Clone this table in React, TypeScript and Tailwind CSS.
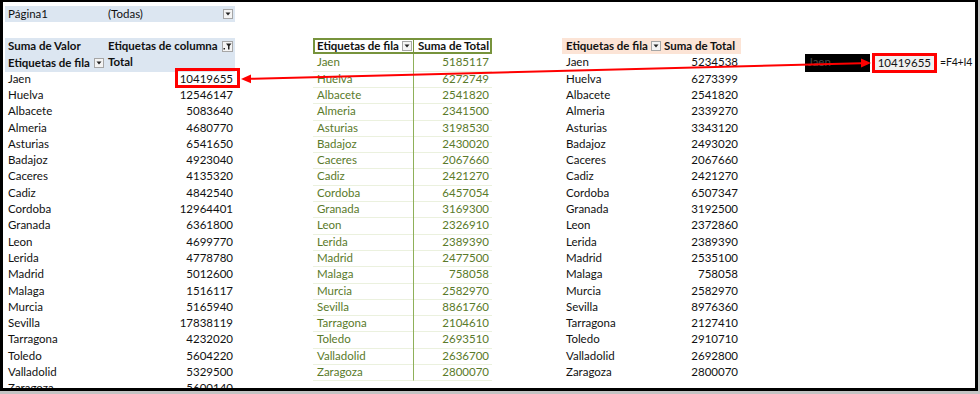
import React from "react";

type Fila = [string, string];

const izquierda: Fila[] = [
  ["Jaen", "10419655"],
  ["Huelva", "12546147"],
  ["Albacete", "5083640"],
  ["Almeria", "4680770"],
  ["Asturias", "6541650"],
  ["Badajoz", "4923040"],
  ["Caceres", "4135320"],
  ["Cadiz", "4842540"],
  ["Cordoba", "12964401"],
  ["Granada", "6361800"],
  ["Leon", "4699770"],
  ["Lerida", "4778780"],
  ["Madrid", "5012600"],
  ["Malaga", "1516117"],
  ["Murcia", "5165940"],
  ["Sevilla", "17838119"],
  ["Tarragona", "4232020"],
  ["Toledo", "5604220"],
  ["Valladolid", "5329500"],
  ["Zaragoza", "5600140"],
];

const centro: Fila[] = [
  ["Jaen", "5185117"],
  ["Huelva", "6272749"],
  ["Albacete", "2541820"],
  ["Almeria", "2341500"],
  ["Asturias", "3198530"],
  ["Badajoz", "2430020"],
  ["Caceres", "2067660"],
  ["Cadiz", "2421270"],
  ["Cordoba", "6457054"],
  ["Granada", "3169300"],
  ["Leon", "2326910"],
  ["Lerida", "2389390"],
  ["Madrid", "2477500"],
  ["Malaga", "758058"],
  ["Murcia", "2582970"],
  ["Sevilla", "8861760"],
  ["Tarragona", "2104610"],
  ["Toledo", "2693510"],
  ["Valladolid", "2636700"],
  ["Zaragoza", "2800070"],
];

const derecha: Fila[] = [
  ["Jaen", "5234538"],
  ["Huelva", "6273399"],
  ["Albacete", "2541820"],
  ["Almeria", "2339270"],
  ["Asturias", "3343120"],
  ["Badajoz", "2493020"],
  ["Caceres", "2067660"],
  ["Cadiz", "2421270"],
  ["Cordoba", "6507347"],
  ["Granada", "3192500"],
  ["Leon", "2372860"],
  ["Lerida", "2389390"],
  ["Madrid", "2535100"],
  ["Malaga", "758058"],
  ["Murcia", "2582970"],
  ["Sevilla", "8976360"],
  ["Tarragona", "2127410"],
  ["Toledo", "2910710"],
  ["Valladolid", "2692800"],
  ["Zaragoza", "2800070"],
];

// botón desplegable de Excel
function Desplegable() {
  return (
    <span className="flex h-[10px] w-[10px] items-center justify-center border border-[#a6a6a6] bg-[#f4f4f4]">
      <svg width="6" height="4" viewBox="0 0 6 4">
        <path d="M0.5 0.5h5L3 3.5z" fill="#222" />
      </svg>
    </span>
  );
}

function Filtro() {
  return (
    <span className="flex h-[11px] w-[11px] items-center justify-center border border-[#a6a6a6] bg-[#f4f4f4]">
      <svg width="9" height="7" viewBox="0 0 9 7">
        <rect x="0.5" y="5" width="1.5" height="1.5" fill="#222" />
        <path d="M3 0.5h5.5L6.5 3v3.5H5V3z" fill="#222" />
      </svg>
    </span>
  );
}

const ROW = "h-[16.3px] leading-[16.3px]";
const GRID =
  "grid grid-cols-[101px_129px_78px_100px_79px_70px_100px_79px_64px_65px_67px_1fr]";

export default function App() {
  const filas = Array.from({ length: 24 }, (_, i) => i);

  return (
    <div
      className="relative h-[394px] w-[980px] bg-[#c4c4c4] text-[11.5px] text-[#111]"
      style={{ fontFamily: "Lato, 'Open Sans', sans-serif" }}
    >
      <div className="h-[391px] w-[978px] overflow-hidden border-x-[3px] border-t-[2px] border-b-[3px] border-black bg-white pt-[3.5px] pl-[2px]">
        {filas.map((r) => {
          const iz = r >= 4 ? izquierda[r - 4] : null;
          const ce = r >= 3 && r <= 22 ? centro[r - 3] : null;
          const de = r >= 3 && r <= 22 ? derecha[r - 3] : null;

          return (
            <div key={r} className={`${GRID} ${ROW}`}>
              {/* tabla dinámica izquierda */}
              {r === 0 && (
                <>
                  <div className="border-b border-white bg-[#dce6f1] pl-[3px]">Página1</div>
                  <div className="flex items-center justify-between border-b border-white bg-[#dce6f1] pl-[2px] pr-[2px]">
                    <span>(Todas)</span>
                    <Desplegable />
                  </div>
                </>
              )}
              {r === 1 && (
                <>
                  <div />
                  <div />
                </>
              )}
              {r === 2 && (
                <>
                  <div className="bg-[#dce6f1] pl-[3px] font-bold">Suma de Valor</div>
                  <div className="flex items-center justify-between bg-[#dce6f1] pl-[2px] pr-[2px] font-bold">
                    <span>Etiquetas de columna</span>
                    <Filtro />
                  </div>
                </>
              )}
              {r === 3 && (
                <>
                  <div className="flex items-center justify-between bg-[#dce6f1] pl-[3px] pr-[2px] font-bold">
                    <span>Etiquetas de fila</span>
                    <Desplegable />
                  </div>
                  <div className="bg-[#dce6f1] pl-[2px] font-bold">Total</div>
                </>
              )}
              {iz && (
                <>
                  <div className="pl-[3px]">{iz[0]}</div>
                  <div className="relative pr-[2px] text-right">
                    {iz[1]}
                    {r === 4 && (
                      <span className="absolute top-[-2.5px] left-[69px] h-[20px] w-[65px] border-[3px] border-[#ff0000]" />
                    )}
                  </div>
                </>
              )}

              <div />

              {/* tabla verde */}
              {r === 2 ? (
                <>
                  <div className="flex items-center justify-between border-y-2 border-l-2 border-[#77933c] pl-[2px] pr-[1px] font-bold leading-none">
                    <span>Etiquetas de fila</span>
                    <Desplegable />
                  </div>
                  <div className="border-y-2 border-r-2 border-l border-[#77933c] pr-[1px] text-right font-bold leading-[12.3px]">
                    Suma de Total
                  </div>
                </>
              ) : ce ? (
                <>
                  <div className="border-b border-[#ebf1de] pl-[4px] text-[#5a7a2a]">{ce[0]}</div>
                  <div className="border-b border-l border-[#ebf1de] border-l-[#8fb059] pr-[3px] text-right text-[#5a7a2a]">
                    {ce[1]}
                  </div>
                </>
              ) : (
                <>
                  <div />
                  <div />
                </>
              )}

              <div />

              {/* tabla naranja */}
              {r === 2 ? (
                <>
                  <div className="flex items-center justify-between bg-[#fce4d6] pl-[4px] pr-[1px] font-bold">
                    <span>Etiquetas de fila</span>
                    <Desplegable />
                  </div>
                  <div className="bg-[#fce4d6] pl-[2px] font-bold">Suma de Total</div>
                </>
              ) : de ? (
                <>
                  <div className="pl-[4px]">{de[0]}</div>
                  <div className="pr-[3px] text-right">{de[1]}</div>
                </>
              ) : (
                <>
                  <div />
                  <div />
                </>
              )}

              <div />

              {/* celda de comprobación */}
              {r === 3 ? (
                <>
                  <div className="bg-black pl-[3px] text-[#484848]">Jaen</div>
                  <div className="relative">
                    <span className="absolute top-[-1.5px] left-[2px] flex h-[20px] w-[65px] items-center justify-end border-[3px] border-[#ff0000] bg-[#f0f0f0] pr-[3px]">
                      10419655
                    </span>
                  </div>
                  <div className="whitespace-nowrap pl-[3px] text-[10.5px] tracking-[-0.2px]">=F4+I4</div>
                </>
              ) : (
                <>
                  <div />
                  <div />
                  <div />
                </>
              )}
            </div>
          );
        })}
      </div>

      {/* flecha roja entre las dos celdas */}
      <svg className="pointer-events-none absolute top-0 left-0" width="980" height="394">
        <line x1="250" y1="78.8" x2="861" y2="63.2" stroke="#ff0000" strokeWidth="2" />
        <path d="M241 79 L251 74.5 L251 83.3 Z" fill="#ff0000" />
        <path d="M871 63 L861 58.6 L861 67.4 Z" fill="#ff0000" />
      </svg>
    </div>
  );
}
